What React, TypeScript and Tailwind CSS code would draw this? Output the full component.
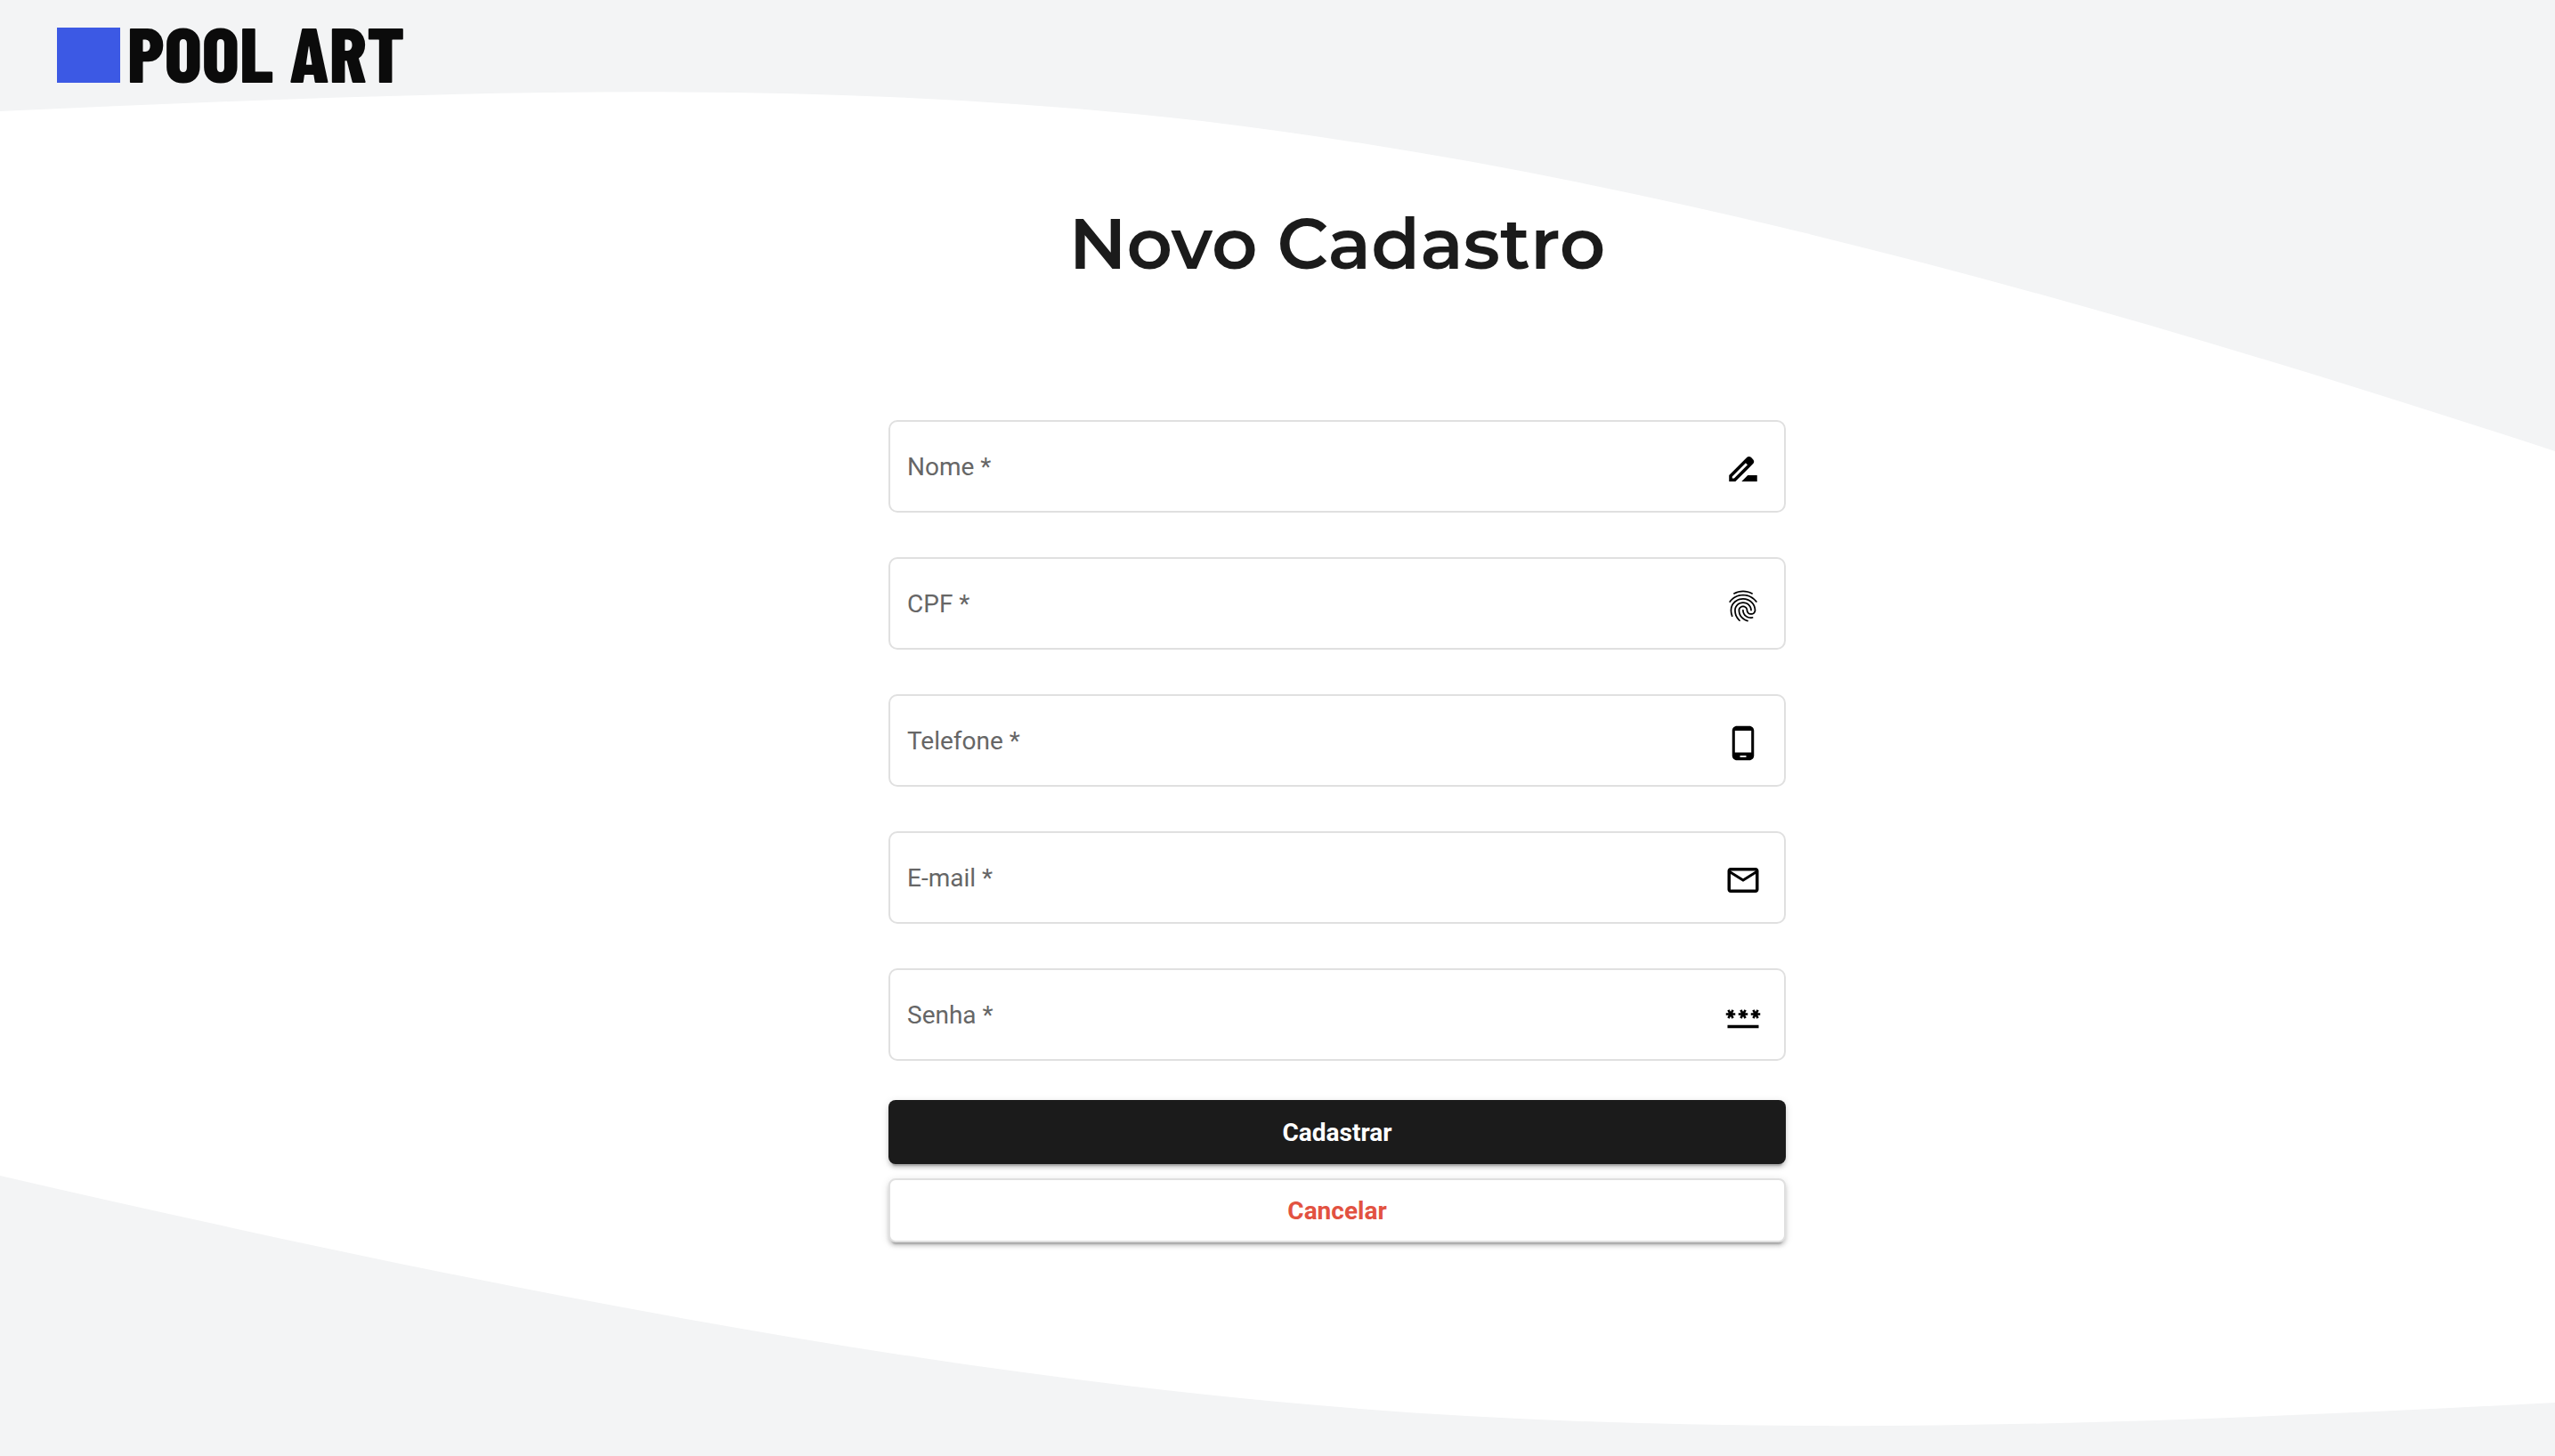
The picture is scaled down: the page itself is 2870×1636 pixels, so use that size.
import { useId, useState } from "react";
import type { IconType } from "react-icons";
import {
  MdDriveFileRenameOutline,
  MdFingerprint,
  MdMailOutline,
  MdPassword,
  MdPhoneAndroid,
} from "react-icons/md";

type FieldProps = { label: string; type: string; icon: IconType };

const fields: FieldProps[] = [
  { label: "Nome", type: "text", icon: MdDriveFileRenameOutline },
  { label: "CPF", type: "text", icon: MdFingerprint },
  { label: "Telefone", type: "tel", icon: MdPhoneAndroid },
  { label: "E-mail", type: "email", icon: MdMailOutline },
  { label: "Senha", type: "password", icon: MdPassword },
];

function Waves() {
  return (
    <svg
      className="absolute inset-0 -z-10 h-full w-full"
      viewBox="0 0 2870 1636"
      preserveAspectRatio="none"
      aria-hidden="true"
    >
      <path
        fill="#f3f4f5"
        d="M0 0H2870V507C2392 351 1913 213 1435 147C957 81 478 104 0 125Z"
      />
      <path
        fill="#f3f4f5"
        d="M0 1636V1321C478 1431 957 1530 1435 1575C1913 1620 2392 1601 2870 1576V1636Z"
      />
    </svg>
  );
}

function Logo() {
  return (
    <a href="#" className="flex h-[62px] items-end gap-2 self-start" aria-label="Pool Art">
      <span className="h-[62px] w-[71px] bg-[#3c59e4]" />
      <span className="pb-1 font-['Barlow_Condensed','Roboto',sans-serif] text-[88px] leading-[62px] font-extrabold text-[#0b0b0b]">
        POOL ART
      </span>
    </a>
  );
}

function Field({ label, type, icon: Icon }: FieldProps) {
  const id = useId();
  const [value, setValue] = useState("");
  return (
    <div className="relative flex h-[104px] items-center rounded-[10px] border-2 border-[#e0e0e0] bg-white pt-0.5 pr-[25px] pl-[19px]">
      <label
        htmlFor={id}
        className={value ? "sr-only" : "pointer-events-none absolute text-[28px] leading-8 text-[#666]"}
      >
        {label} *
      </label>
      <input
        id={id}
        type={type}
        required
        value={value}
        onChange={(e) => setValue(e.target.value)}
        className="h-full min-w-0 flex-1 bg-transparent text-[28px] text-[#1b1b1b] outline-none"
      />
      <Icon className="mt-1 size-[42px] text-black" aria-hidden="true" />
    </div>
  );
}

export default function App() {
  return (
    <div className="relative isolate flex min-h-screen flex-col bg-white px-16 pt-[31px] font-['Roboto',sans-serif]">
      <Waves />
      <Logo />
      <div className="flex justify-center pt-[132px] pl-[134px]">
        <main className="flex w-full max-w-[1008px] flex-col">
          <h1 className="text-center font-['Montserrat','Inter',sans-serif] text-[80px] leading-[98px] font-semibold text-[#1b1b1b]">
            Novo Cadastro
          </h1>
          <form className="flex flex-col pt-[149px]" onSubmit={(e) => e.preventDefault()}>
            <div className="flex flex-col gap-[50px]">
              {fields.map((f) => (
                <Field key={f.label} {...f} />
              ))}
            </div>
            <button
              type="submit"
              className="mt-11 h-[72px] rounded-lg bg-[#1b1b1b] pt-0.5 text-[28px] font-bold text-white shadow-[0_6px_2px_-4px_rgba(0,0,0,0.2),0_4px_4px_0_rgba(0,0,0,0.14),0_2px_10px_0_rgba(0,0,0,0.12)]"
            >
              Cadastrar
            </button>
            <button
              type="button"
              className="mt-4 h-[72px] rounded-lg border-2 border-[#e0e0e0] bg-white pt-0.5 text-[28px] font-bold text-[#e25241] shadow-[0_6px_2px_-4px_rgba(0,0,0,0.2),0_4px_4px_0_rgba(0,0,0,0.14),0_2px_10px_0_rgba(0,0,0,0.12)]"
            >
              Cancelar
            </button>
          </form>
        </main>
      </div>
    </div>
  );
}
